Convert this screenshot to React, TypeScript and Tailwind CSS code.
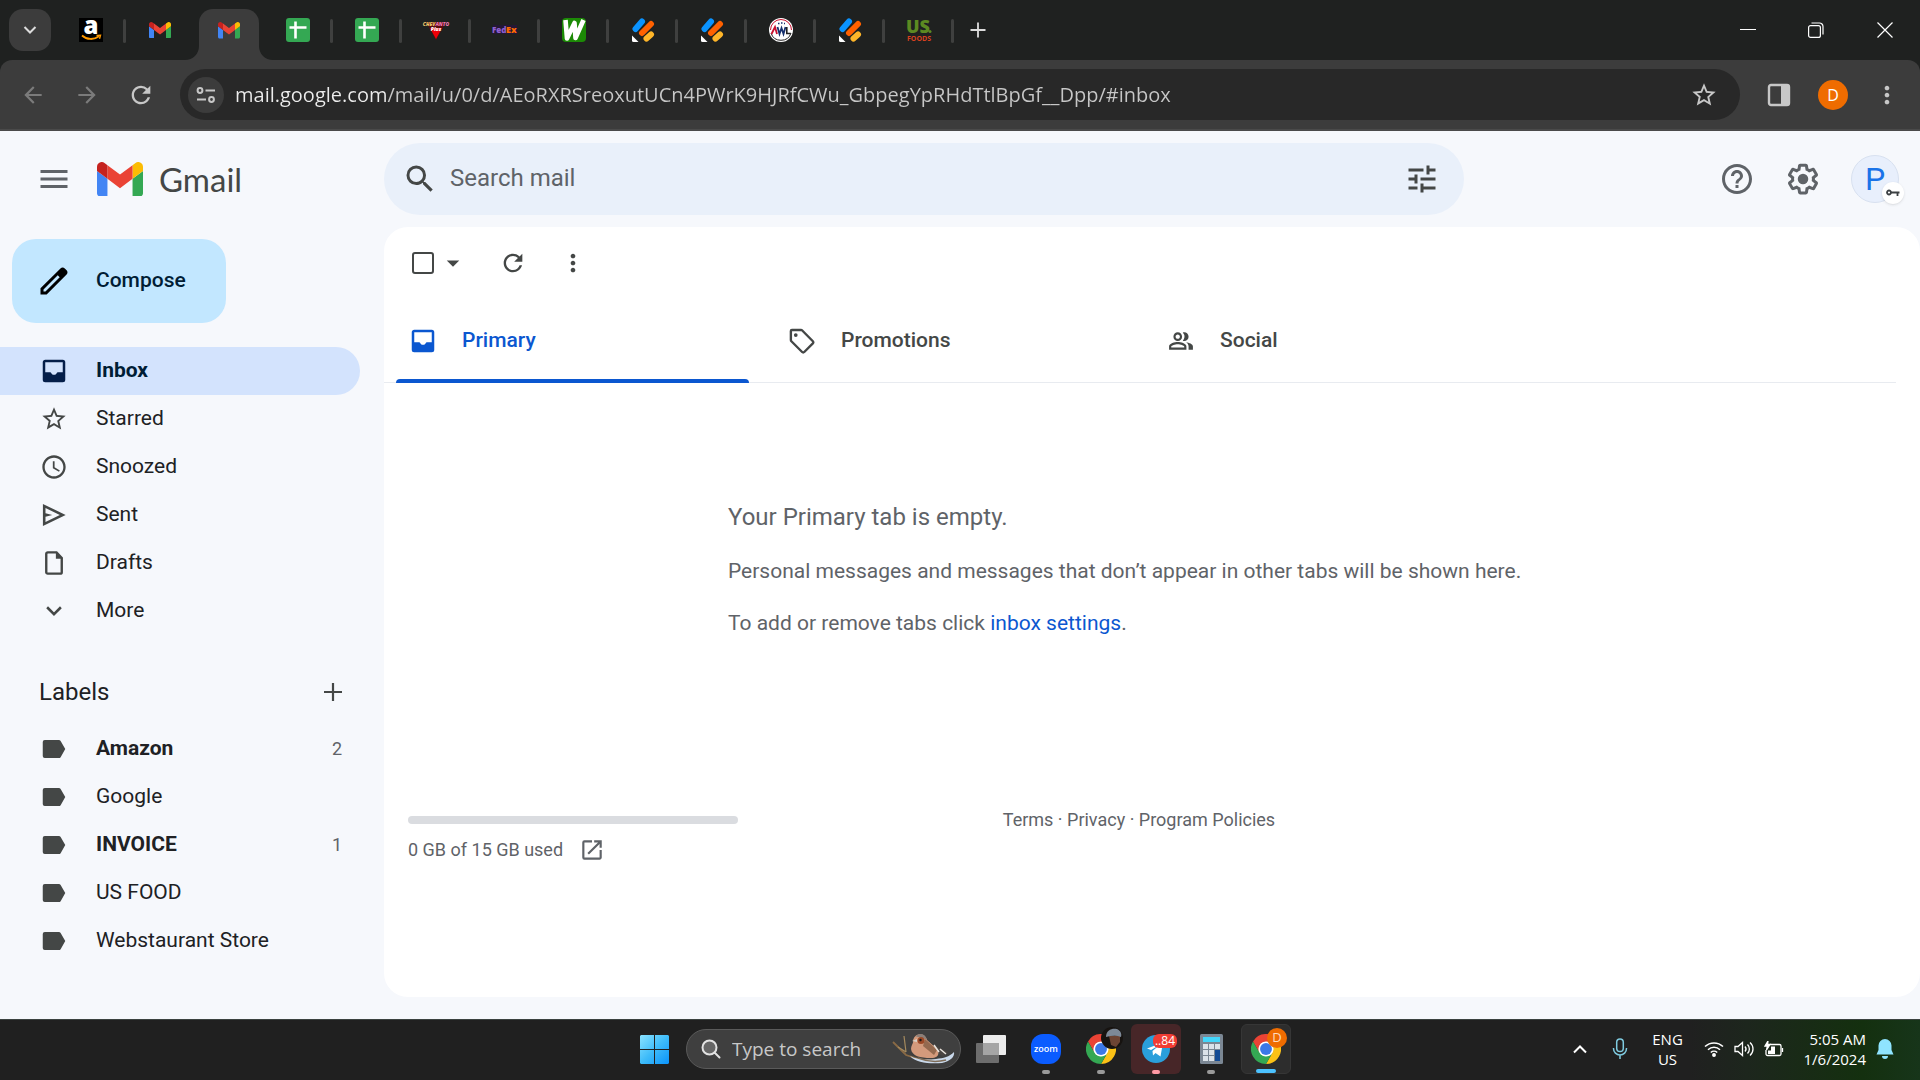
import React from "react";
import {
  MdArrowBack,
  MdArrowDropDown,
  MdArrowForward,
  MdHelpOutline,
  MdMenu,
  MdMoreVert,
  MdOpenInNew,
  MdOutlinePeopleAlt,
  MdRefresh,
  MdSchedule,
  MdSearch,
  MdStarBorder,
  MdTune,
} from "react-icons/md";

const gmailFont = "font-[Roboto,'Open_Sans',sans-serif]";
const systemFont = "font-['Open_Sans','Noto_Sans',sans-serif]";

interface IconProps {
  className?: string;
}

function GmailLogo({ className }: IconProps) {
  return (
    <svg viewBox="52 42 88 66" className={className} aria-hidden="true">
      <path fill="#4285f4" d="M58 108h14V74L52 59v43c0 3.32 2.69 6 6 6" />
      <path fill="#34a853" d="M120 108h14c3.32 0 6-2.69 6-6V59l-20 15" />
      <path fill="#fbbc04" d="M120 48v26l20-15v-8c0-7.42-8.47-11.65-14.4-7.2" />
      <path fill="#ea4335" d="M72 74V48l24 18 24-18v26L96 92" />
      <path fill="#c5221f" d="M52 51v8l20 15V48l-5.6-4.2c-5.94-4.45-14.4-.22-14.4 7.2" />
    </svg>
  );
}

function AmazonIcon() {
  return (
    <svg viewBox="0 0 24 24" className="size-6 overflow-visible" aria-hidden="true">
      <rect width="24" height="24" fill="#000" />
      <text x="12" y="16" textAnchor="middle" fontFamily="Open Sans" fontWeight="800" fontSize="24" fill="#fff">a</text>
      <path d="M3 17.5c5 4.5 12 4.5 17 .8" fill="none" stroke="#f90" strokeWidth="1.8" />
      <path d="M17.5 17.5l4-.3-1 3.6" fill="none" stroke="#f90" strokeWidth="1.4" />
    </svg>
  );
}

function SheetsIcon() {
  return (
    <svg viewBox="0 0 24 24" className="size-6" aria-hidden="true">
      <rect width="24" height="24" rx="3" fill="#34a853" />
      <path d="M9.5 3.500v17M3.500 9.500h17" stroke="#fff" strokeWidth="2.6" />
    </svg>
  );
}

function PizzaIcon() {
  return (
    <svg viewBox="0 0 24 24" className="size-6 overflow-visible" aria-hidden="true">
      <path d="M2 4h20L12 22z" fill="#5b0d10" />
      <path d="M6 10h12L12 21z" fill="#f00008" />
      <text x="12" y="8" textAnchor="middle" fontFamily="Open Sans" fontWeight="800" fontStyle="italic" fontSize="5" fill="#e879b0">
        <tspan fill="#e8c46a">CHEV</tspan>ANTO
      </text>
      <text x="12" y="13" textAnchor="middle" fontFamily="Open Sans" fontWeight="800" fontStyle="italic" fontSize="5" fill="#fff">Plus</text>
    </svg>
  );
}

function FedexIcon() {
  return (
    <svg viewBox="0 0 24 24" className="size-6 overflow-visible" aria-hidden="true">
      <rect y="7" width="24" height="9" fill="#241735" />
      <text x="-1" y="14.5" fontFamily="Open Sans" fontWeight="800" fontSize="8" fill="#8f5fd0">Fed</text>
      <text x="13" y="15" fontFamily="Open Sans" fontWeight="800" fontSize="9" fill="#ff6a00">Ex</text>
    </svg>
  );
}

function WIcon() {
  return (
    <svg viewBox="0 0 24 24" className="size-6" aria-hidden="true">
      <rect width="24" height="24" rx="4" fill="#1c8a06" />
      <path d="M3.500 2L5 20.500L12.500 5L13.500 20L21.500 2" fill="none" stroke="#fff" strokeWidth="4.6" strokeLinejoin="round" />
    </svg>
  );
}

function PencilIcon() {
  return (
    <svg viewBox="0 0 24 24" className="size-6" aria-hidden="true">
      <g strokeLinecap="round" strokeWidth="6" fill="none">
        <path d="M4.500 11L11 3.500" stroke="#0a93ff" />
        <path d="M11 15L20 6" stroke="#ff6100" />
        <path d="M15.500 20.500L20 16.500" stroke="#ffb629" />
      </g>
      <path d="M1 17.500L7.500 24H2.500a1.500 1.500 0 0 1-1.500-1.500z" fill="#fff" />
    </svg>
  );
}

function AwlIcon() {
  return (
    <svg viewBox="0 0 24 24" className="size-6" aria-hidden="true">
      <circle cx="12" cy="12" r="12" fill="#fff" />
      <path d="M1.500 12a10.500 10.500 0 0 1 21 0" fill="none" stroke="#c8102e" />
      <path d="M2 15a10.500 10.500 0 0 0 20 0" fill="none" stroke="#222" />
      <path d="M2.500 16l3.500-7 2 7" fill="none" stroke="#c8102e" strokeWidth="1.8" />
      <path d="M8.500 9l2 7 2-6 2 6 2-7" fill="none" stroke="#16306d" strokeWidth="1.8" />
      <path d="M17.800 9v6.500h4" fill="none" stroke="#222" strokeWidth="1.6" />
      <path d="M9 5.500h1.500M12 5h1.500M15 5.500h1" stroke="#16306d" strokeWidth="1.3" />
    </svg>
  );
}

function UsFoodsIcon() {
  return (
    <svg viewBox="0 0 24 24" className="size-6 overflow-visible" aria-hidden="true">
      <text x="-1" y="14.5" fontFamily="Open Sans" fontWeight="800" fontSize="18" fill="#5c8a22">US</text>
      <circle cx="23" cy="13.5" r="1.5" fill="#5c8a22" />
      <text x="0" y="23" fontFamily="Open Sans" fontWeight="700" fontSize="7" fill="#d8401f">FOODS</text>
    </svg>
  );
}

function InboxIcon({ className }: IconProps) {
  return (
    <svg viewBox="0 0 24 24" className={className} fill="currentColor" fillRule="evenodd" aria-hidden="true">
      <path d="M5 3h14a2 2 0 0 1 2 2v14a2 2 0 0 1-2 2H5a2 2 0 0 1-2-2V5c0-1.100.9-2 2-2zm0 2v8h3.800c.6 0 .9.300 1.100.8.4.8 1.100 1.200 2.100 1.200s1.700-.4 2.100-1.200c.2-.5.500-.8 1.100-.8H19V5z" />
    </svg>
  );
}

function SendIcon({ className }: IconProps) {
  return (
    <svg viewBox="0 0 24 24" className={className} fill="currentColor" fillRule="evenodd" aria-hidden="true">
      <path d="M2.500 2.500v19L22 12zM4.700 6L17 12 4.700 18v-4.500L10.500 12l-5.800-1.500z" />
    </svg>
  );
}

function FileIcon({ className }: IconProps) {
  return (
    <svg viewBox="0 0 24 24" className={className} aria-hidden="true">
      <path d="M14 3.500H7A1.200 1.200 0 0 0 5.800 4.700v14.600A1.200 1.200 0 0 0 7 20.500h10a1.200 1.200 0 0 0 1.200-1.200V8z" fill="none" stroke="currentColor" strokeWidth="1.9" />
      <path d="M13.500 3v5.500h5.300z" fill="currentColor" />
    </svg>
  );
}

function ChevronIcon({ className }: IconProps) {
  return (
    <svg viewBox="0 0 24 24" className={className} fill="none" stroke="currentColor" strokeWidth="2" aria-hidden="true">
      <path d="M6.500 9l5.500 5.500L17.500 9" />
    </svg>
  );
}

function PlusIcon({ className }: IconProps) {
  return (
    <svg viewBox="0 0 24 24" className={className} fill="none" stroke="currentColor" strokeWidth="2.2" aria-hidden="true">
      <path d="M12 3v18M3 12h18" />
    </svg>
  );
}

function LabelIcon({ className }: IconProps) {
  return (
    <svg viewBox="0 0 24 24" className={className} fill="currentColor" aria-hidden="true">
      <path d="M4.600 4.800h11.300c.6 0 1.100.3 1.400.7L21 12l-3.700 6.500c-.3.4-.8.7-1.400.7H4.600A1.600 1.600 0 0 1 3 17.600V6.400a1.600 1.600 0 0 1 1.600-1.600z" />
    </svg>
  );
}

function TagIcon({ className }: IconProps) {
  return (
    <svg viewBox="0 0 24 24" className={className} aria-hidden="true">
      <path d="M3.900 3.200h7.300c.4 0 .7.1 1 .4l8.500 8.600c.5.500.5 1.200 0 1.700l-6.900 6.900c-.5.500-1.200.5-1.700 0L3.500 12.200c-.3-.3-.4-.6-.4-1V4c0-.5.3-.8.8-.8z" fill="none" stroke="currentColor" strokeWidth="1.9" />
      <circle cx="7" cy="7.2" r="1.5" fill="currentColor" />
    </svg>
  );
}

function GearIcon({ className }: IconProps) {
  return (
    <svg viewBox="0 0 24 24" className={className} fill="currentColor" aria-hidden="true">
      <path d="M13.850 22.250h-3.700c-.74 0-1.360-.54-1.450-1.270l-.27-1.890c-.27-.14-.53-.29-.79-.46l-1.800.72c-.7.26-1.470-.03-1.810-.65L2.200 15.530c-.35-.66-.2-1.440.36-1.880l1.530-1.190c-.01-.15-.02-.3-.02-.46 0-.15.01-.31.02-.46l-1.520-1.190c-.59-.45-.74-1.260-.37-1.880l1.850-3.190c.34-.62 1.110-.9 1.790-.63l1.810.73c.26-.17.52-.32.78-.46l.27-1.910c.09-.7.71-1.250 1.440-1.250h3.700c.74 0 1.360.54 1.450 1.270l.27 1.890c.27.14.53.29.79.46l1.800-.72c.71-.26 1.480.03 1.820.65l1.840 3.180c.36.66.2 1.440-.36 1.880l-1.520 1.190c.01.15.02.3.02.46s-.01.31-.02.46l1.520 1.190c.56.45.72 1.230.37 1.860l-1.860 3.220c-.34.62-1.110.9-1.800.63l-1.800-.72c-.26.17-.52.32-.78.46l-.27 1.910c-.1.680-.72 1.220-1.460 1.220zm-3.230-2h2.760l.37-2.550.53-.22c.44-.18.88-.44 1.340-.78l.45-.34 2.380.96 1.380-2.400-2.030-1.580.07-.56c.03-.26.06-.51.06-.78s-.03-.53-.06-.78l-.07-.56 2.030-1.580-1.390-2.400-2.390.96-.45-.35c-.42-.32-.87-.58-1.330-.77l-.52-.22-.37-2.550h-2.760l-.37 2.550-.53.21c-.44.19-.88.44-1.340.79l-.45.33-2.380-.95-1.390 2.390 2.030 1.580-.07.56a7 7 0 0 0-.06.79c0 .26.02.53.06.78l.07.56-2.030 1.580 1.380 2.400 2.390-.96.45.35c.43.33.86.58 1.330.77l.53.22z" />
      <circle cx="12" cy="12" r="3.5" />
    </svg>
  );
}

function ChromeIcon({ className }: IconProps) {
  return (
    <svg viewBox="0 0 48 48" className={className} aria-hidden="true">
      <circle cx="24" cy="24" r="13" fill="#fff" />
      <path d="M3.200 12A24 24 0 0 1 44.800 12H24A12 12 0 0 0 13.600 30z" fill="#ea4335" />
      <path d="M44.800 12A24 24 0 0 1 24 48L34.400 30A12 12 0 0 0 24 12z" fill="#fbc116" />
      <path d="M24 48A24 24 0 0 1 3.200 12L13.600 30A12 12 0 0 0 34.400 30z" fill="#34a853" />
      <circle cx="24" cy="24" r="9.5" fill="#3b78e7" />
    </svg>
  );
}

function BirdDrawing() {
  return (
    <svg viewBox="0 0 64 32" className="h-8 w-16 shrink-0" aria-hidden="true">
      <path d="M1 9l13 13 16 5 18 1" fill="none" stroke="#8a6a45" strokeWidth="1.8" />
      <path d="M12 3l2 16M6 14l8 5" fill="none" stroke="#a58a5e" strokeWidth="1.2" />
      <path d="M18 23c8 4 16 4 26 3 8-1 13-2 18-7 1 5-4 9-12 11-12 1-26 0-32-7z" fill="#c9d8ea" />
      <path d="M26 25c10 4 20 4 28 2" stroke="#7e6c57" strokeWidth="1.5" fill="none" />
      <path d="M38 10l18 9-5 4-9-4z" fill="#4a4542" />
      <path d="M21 7c3-8 12-7 14 0l10 9c3 5 1 9-6 9-11 0-19-2-20-9 0-4 3-6 2-9z" fill="#d39a7c" />
      <path d="M33 6l12 11-3 5-11-9z" fill="#94694f" />
      <path d="M42 12l5 7m1-3l6 5" stroke="#e9e5df" strokeWidth="1.5" />
      <path d="M24 3.500c3-4 9-3 11 3l-7-2z" fill="#8b7f79" />
      <circle cx="29" cy="7.5" r="3.5" fill="#9c4a28" />
      <circle cx="28.5" cy="7" r="1.2" fill="#191919" />
      <path d="M25 6l-5 2 5 1z" fill="#d8d2c8" />
    </svg>
  );
}

interface BrowserTab {
  title: string;
  icon: React.ReactNode;
  active?: boolean;
  divider?: boolean;
}

const browserTabs: BrowserTab[] = [
  { title: "Amazon", icon: <AmazonIcon />, divider: true },
  { title: "Gmail", icon: <GmailLogo className="w-[22px]" /> },
  { title: "Inbox", icon: <GmailLogo className="w-[22px]" />, active: true },
  { title: "Sheet 1", icon: <SheetsIcon />, divider: true },
  { title: "Sheet 2", icon: <SheetsIcon />, divider: true },
  { title: "Pizza", icon: <PizzaIcon />, divider: true },
  { title: "FedEx", icon: <FedexIcon />, divider: true },
  { title: "Webstaurant", icon: <WIcon />, divider: true },
  { title: "Editor 1", icon: <PencilIcon />, divider: true },
  { title: "Editor 2", icon: <PencilIcon />, divider: true },
  { title: "AWL", icon: <AwlIcon />, divider: true },
  { title: "Editor 3", icon: <PencilIcon />, divider: true },
  { title: "US Foods", icon: <UsFoodsIcon />, divider: true },
];

function TabStrip() {
  return (
    <div className="flex h-[60px] items-stretch bg-[#1f2120] pl-[9px] text-[#dcdcdc]">
      <button aria-label="Search tabs" className="mt-[9px] mr-[5px] flex size-[42px] items-center justify-center rounded-[14px] bg-[#3c3c3c]">
        <ChevronIcon className="size-6" />
      </button>
      {browserTabs.map((tab) => (
        <button key={tab.title} aria-label={tab.title} className="relative flex w-[69px] items-stretch justify-center">
          {tab.active ? (
            <span className="relative mt-[9px] flex w-[60px] items-start justify-center rounded-t-[14px] bg-[#3c3c3c] pt-[13px]">
              {tab.icon}
              <svg viewBox="0 0 14 14" className="absolute bottom-0 -left-3.5 size-3.5" aria-hidden="true">
                <path d="M14 0v14H0C8 14 14 8 14 0z" fill="#3c3c3c" />
              </svg>
              <svg viewBox="0 0 14 14" className="absolute -right-3.5 bottom-0 size-3.5" aria-hidden="true">
                <path d="M0 0v14h14C6 14 0 8 0 0z" fill="#3c3c3c" />
              </svg>
            </span>
          ) : (
            <span className="flex h-[60px] items-center">{tab.icon}</span>
          )}
          {tab.divider && <span className="absolute top-[19px] -right-px h-6 w-[3px] rounded-full bg-[#3f403f]" />}
        </button>
      ))}
      <button aria-label="New tab" className="flex w-[50px] items-center justify-center">
        <PlusIcon className="size-5" />
      </button>
      <div className="ml-auto flex text-white">
        <button aria-label="Minimize" className="flex w-[69px] items-center justify-center">
          <svg viewBox="0 0 16 16" className="size-4" stroke="currentColor" aria-hidden="true">
            <path d="M0 7.500h16" />
          </svg>
        </button>
        <button aria-label="Restore" className="flex w-[68px] items-center justify-center">
          <svg viewBox="0 0 16 16" className="size-4" fill="none" stroke="currentColor" strokeWidth="1.2" aria-hidden="true">
            <rect x=".6" y="3.6" width="11.8" height="11.8" rx="2" />
            <path d="M3.500 1h8A3.500 3.500 0 0 1 15 4.500v8" />
          </svg>
        </button>
        <button aria-label="Close" className="flex w-[70px] items-center justify-center">
          <svg viewBox="0 0 16 16" className="size-4" stroke="currentColor" strokeWidth="1.2" aria-hidden="true">
            <path d="M.5.5l15 15M15.500.5l-15 15" />
          </svg>
        </button>
      </div>
    </div>
  );
}

function AddressBar() {
  return (
    <div className="bg-[#1f2120]">
      <div className="flex h-[71px] items-center rounded-t-xl border-b-2 border-[#4a4a4a] bg-[#3c3c3c] pl-1.5 text-[#c7c7c7]">
        <button aria-label="Back" className="flex w-[54px] justify-center text-[#7b7b7b]"><MdArrowBack className="size-[26px]" /></button>
        <button aria-label="Forward" className="flex w-[54px] justify-center text-[#7b7b7b]"><MdArrowForward className="size-[26px]" /></button>
        <button aria-label="Reload" className="flex w-[54px] justify-center"><MdRefresh className="size-[28px]" /></button>
        <div className="ml-3 flex h-[51px] flex-1 items-center rounded-full bg-[#282828] pr-[22px] pl-2">
          <button aria-label="Site information" className="flex size-9 items-center justify-center rounded-full bg-[#3c3c3c]">
            <svg viewBox="0 0 20 20" className="size-5" fill="none" stroke="currentColor" strokeWidth="2" aria-hidden="true">
              <circle cx="4" cy="5.5" r="2.4" />
              <path d="M9.500 5.500H19M1 14.500h9" />
              <circle cx="15.5" cy="14.5" r="2.4" />
            </svg>
          </button>
          <input
            aria-label="Address"
            defaultValue="mail.google.com/mail/u/0/d/AEoRXRSreoxutUCn4PWrK9HJRfCWu_GbpegYpRHdTtlBpGf__Dpp/#inbox"
            className="ml-[11px] min-w-0 flex-1 bg-[linear-gradient(90deg,#ececec_152px,#c7c7c7_152px)] bg-clip-text text-xl text-transparent outline-none"
          />
          <button aria-label="Bookmark this page"><MdStarBorder className="size-7" /></button>
        </div>
        <button aria-label="Side panel" className="ml-[27px]">
          <svg viewBox="0 0 24 24" className="size-6" aria-hidden="true">
            <rect x="2" y="2" width="20" height="20" rx="2" fill="none" stroke="currentColor" strokeWidth="2.4" />
            <path d="M14 2h8v20h-8z" fill="currentColor" />
          </svg>
        </button>
        <button aria-label="Profile" className="ml-[27px] flex size-[30px] items-center justify-center rounded-full bg-[#ef6c00] text-base text-white">D</button>
        <button aria-label="Chrome menu" className="mr-[19px] ml-[25px]"><MdMoreVert className="size-7" /></button>
      </div>
    </div>
  );
}

function GmailHeader() {
  return (
    <header className="flex h-24 items-center text-[#5f6368]">
      <div className="flex w-96 shrink-0 items-center">
        <button aria-label="Main menu" className="ml-9"><MdMenu className="size-9" /></button>
        <a href="#inbox" className="ml-[25px] flex items-center gap-4">
          <GmailLogo className="w-[46px]" />
          <span className="font-[Lato,sans-serif] text-[33px] leading-10 text-[#444746]">Gmail</span>
        </a>
      </div>
      <div className="flex h-[72px] max-w-[1080px] flex-1 items-center rounded-full bg-[#e9f0fa] pr-4 pl-[18px] text-[#444746]">
        <button aria-label="Search" className="flex size-9 items-center justify-center"><MdSearch className="size-9" /></button>
        <input aria-label="Search mail" placeholder="Search mail" className="ml-3 min-w-0 flex-1 bg-transparent pb-0.5 text-2xl outline-none placeholder:text-[#5f6368]" />
        <button aria-label="Show search options" className="mr-2"><MdTune className="size-9" /></button>
      </div>
      <div className="ml-auto flex items-center pr-[21px]">
        <button aria-label="Support"><MdHelpOutline className="size-9" /></button>
        <button aria-label="Settings" className="ml-[30px]"><GearIcon className="size-9" /></button>
        <button aria-label="Account" className="relative ml-[30px] flex size-12 items-center justify-center rounded-full border border-[#d8e1f0] bg-[#e8effc] text-[32px] text-[#1a73e8]">
          P
          <span className="absolute -right-1.5 -bottom-0.5 flex size-[22px] items-center justify-center rounded-full bg-white shadow">
            <svg viewBox="0 0 14 8" className="h-2 w-3.5" fill="none" stroke="#3c4043" strokeWidth="1.8" aria-hidden="true">
              <circle cx="3" cy="3.5" r="2" />
              <path d="M5 3.500h8.500M11.500 3.500V7" />
            </svg>
          </span>
        </button>
      </div>
    </header>
  );
}

const folders = [
  { name: "Inbox", icon: <InboxIcon className="size-[30px]" />, active: true },
  { name: "Starred", icon: <MdStarBorder className="size-7" /> },
  { name: "Snoozed", icon: <MdSchedule className="size-7" /> },
  { name: "Sent", icon: <SendIcon className="size-7" /> },
  { name: "Drafts", icon: <FileIcon className="size-[30px]" /> },
  { name: "More", icon: <ChevronIcon className="size-[30px]" /> },
];

const labels = [
  { name: "Amazon", count: 2 },
  { name: "Google" },
  { name: "INVOICE", count: 1 },
  { name: "US FOOD" },
  { name: "Webstaurant Store" },
];

function Sidebar() {
  return (
    <aside className="w-96 shrink-0 pr-6 text-[21px] text-[#202124]">
      <button className="mt-3 ml-3 flex h-[84px] w-[214px] items-center rounded-3xl bg-[#c2e7ff] font-medium text-[#001d35]">
        <svg viewBox="0 0 24 24" className="ml-6 size-9" fill="#000" fillRule="evenodd" aria-hidden="true">
          <path d="M20.400 4.820l-1.220-1.220c-.8-.8-2.080-.8-2.880 0L3 16.900V21h4.100L20.400 7.700c.8-.8.8-2.080 0-2.880zM6.300 19H5v-1.300l9.500-9.500 1.300 1.300z" />
        </svg>
        <span className="ml-6">Compose</span>
      </button>
      <nav aria-label="Folders" className="mt-6">
        {folders.map((folder) => (
          <a
            key={folder.name}
            href={`#${folder.name.toLowerCase()}`}
            className={`flex h-12 items-center rounded-r-full pl-9 ${folder.active ? "bg-[#d3e3fd] font-bold text-[#001d35]" : ""}`}
          >
            <span className={`flex w-9 justify-center ${folder.active ? "text-[#041e49]" : "text-[#444746]"}`}>{folder.icon}</span>
            <span className="ml-6">{folder.name}</span>
          </a>
        ))}
      </nav>
      <div className="mt-8 mb-2 flex h-[50px] items-center justify-between pr-[15px] pl-[39px]">
        <h2 className="text-2xl text-[#202124]">Labels</h2>
        <button aria-label="Create new label" className="text-[#444746]"><PlusIcon className="size-6" /></button>
      </div>
      <nav aria-label="Labels">
        {labels.map((label) => (
          <a key={label.name} href="#label" className="flex h-12 items-center pr-[18px] pl-9">
            <span className="flex w-9 justify-center text-[#444746]"><LabelIcon className="size-[30px]" /></span>
            <span className={`ml-6 flex-1 ${label.count ? "font-bold" : ""}`}>{label.name}</span>
            {label.count && <span className="text-lg text-[#5f6368]">{label.count}</span>}
          </a>
        ))}
      </nav>
    </aside>
  );
}

const categories = [
  { name: "Primary", icon: <InboxIcon className="size-[30px]" />, active: true },
  { name: "Promotions", icon: <TagIcon className="size-[30px]" /> },
  { name: "Social", icon: <MdOutlinePeopleAlt className="size-[26px]" /> },
];

function MailPanel() {
  return (
    <main className="flex-1 rounded-3xl bg-white text-[#5f6368]">
      <div className="flex h-[72px] items-center pl-7 text-[#444746]">
        <input type="checkbox" aria-label="Select" className="size-[22px] appearance-none rounded-[3px] border-2 border-[#444746]" />
        <button aria-label="Select options" className="ml-1"><MdArrowDropDown className="size-[30px]" /></button>
        <button aria-label="Refresh" className="ml-[31px]"><MdRefresh className="size-[28px]" /></button>
        <button aria-label="More" className="ml-8"><MdMoreVert className="size-[28px]" /></button>
      </div>
      <div role="tablist" className="mr-6 flex h-[84px] border-b border-[#e8ebf0]">
        {categories.map((category) => (
          <button
            key={category.name}
            role="tab"
            aria-selected={!!category.active}
            className={`relative flex w-[379px] items-center pl-6 text-[21px] font-medium ${category.active ? "text-[#0b57d0]" : "text-[#444746]"}`}
          >
            <span className="flex w-[30px] justify-center">{category.icon}</span>
            <span className="ml-6">{category.name}</span>
            {category.active && <span className="absolute right-3.5 -bottom-px left-3 h-1 rounded-t bg-[#0b57d0]" />}
          </button>
        ))}
      </div>
      <div className="flex justify-center pt-28 pr-[38px]">
        <div className="w-[810px] text-[21px] whitespace-nowrap">
          <p className="mb-4 text-2xl leading-11">Your Primary tab is empty.</p>
          <p className="mb-5 leading-8">Personal messages and messages that don’t appear in other tabs will be shown here.</p>
          <p className="leading-8">
            To add or remove tabs click <a href="#settings" className="text-[#0b57d0]">inbox settings</a>.
          </p>
        </div>
      </div>
      <footer className="grid grid-cols-3 pt-[167px] pr-[50px] pb-[120px] pl-6 text-lg">
        <div>
          <div className="mt-[10px] h-2 w-[330px] rounded-full bg-[#dadce0]" />
          <p className="mt-3 flex items-center">
            0 GB of 15 GB used
            <a href="#storage" aria-label="Manage storage" className="ml-4"><MdOpenInNew className="size-[26px]" /></a>
          </p>
        </div>
        <p className="text-center whitespace-nowrap">
          <a href="#terms">Terms</a> · <a href="#privacy">Privacy</a> · <a href="#policies">Program Policies</a>
        </p>
      </footer>
    </main>
  );
}

function Taskbar() {
  return (
    <div className="grid h-[61px] grid-cols-[1fr_auto_1fr] items-start border-t border-[#3b423f] bg-[linear-gradient(90deg,#202020_88%,#1d261d_91%,#14300f_97%,#17351a_100%)] text-white">
      <div />
      <div className="flex items-center gap-[5px] pt-1">
        <button aria-label="Start" className="mr-0.5 flex size-[50px] items-center justify-center">
          <svg viewBox="0 0 29 29" className="size-[29px]" aria-hidden="true">
            <defs>
              <linearGradient id="win" x1="0" y1="0" x2="29" y2="29" gradientUnits="userSpaceOnUse">
                <stop stopColor="#8be3ff" />
                <stop offset=".5" stopColor="#3fbcf9" />
                <stop offset="1" stopColor="#0a93fb" />
              </linearGradient>
            </defs>
            <path d="M1 0h13v14H0V1zM15 0h13l1 1v13H15zM0 15h14v14H1l-1-1zM15 15h14v13l-1 1H15z" fill="url(#win)" />
          </svg>
        </button>
        <label className="flex h-10 w-[275px] items-center rounded-full border border-[#5a5a5a] bg-[#3f3f3f] pr-1 pl-3.5">
          <svg viewBox="0 0 20 20" className="size-5 shrink-0" fill="#666" stroke="#e2e2e2" strokeWidth="2" strokeLinecap="round" aria-hidden="true">
            <circle cx="8.5" cy="8.5" r="7" />
            <path d="M13.500 13.500L18.500 18.500" />
          </svg>
          <input aria-label="Type to search" placeholder="Type to search" className="ml-[11px] min-w-0 flex-1 bg-transparent text-[19px] outline-none placeholder:text-[#c8c8c8]" />
          <BirdDrawing />
        </label>
        <button aria-label="Task view" className="flex size-[50px] items-center justify-center">
          <svg viewBox="0 0 30 28" className="h-7 w-[30px]" aria-hidden="true">
            <rect x="7" width="23" height="20" rx="1" fill="#ececec" />
            <rect y="8" width="23" height="20" rx="1" fill="#6d6d6d" />
            <path d="M7 8h16v12H7z" fill="#a5a5a5" />
          </svg>
        </button>
        <button className="relative flex size-[50px] items-center justify-center">
          <span className="flex size-[30px] items-center justify-center rounded-xl bg-[#0b5cff] text-[9px] font-semibold">zoom</span>
          <span className="absolute bottom-0 h-1 w-2 rounded-full bg-[#9a9a9a]" />
        </button>
        <button aria-label="Chrome" className="relative flex size-[50px] items-center justify-center">
          <ChromeIcon className="size-[30px]" />
          <svg viewBox="0 0 22 22" className="absolute top-[3px] right-[3px] size-[22px]" aria-hidden="true">
            <circle cx="11" cy="11" r="11" fill="#171310" />
            <path d="M8 9h11v6l-4 5-5-2z" fill="#6d4433" />
            <path d="M5 10C5 3 11 1 16 2c4 2 5 5 4 8-5-2-10-1-15 0z" fill="#7d8997" />
          </svg>
          <span className="absolute bottom-0 h-1 w-2 rounded-full bg-[#9a9a9a]" />
        </button>
        <button aria-label="Telegram" className="relative flex size-[50px] items-center justify-center rounded-md bg-[#472628]">
          <svg viewBox="0 0 28 28" className="size-7" aria-hidden="true">
            <circle cx="14" cy="14" r="14" fill="#2a9fdb" />
            <path d="M5 13.500L21 7.500l-2.500 14-5-3.500-2.500 2.500-.5-4.500 7-6-8.500 5z" fill="#fff" />
          </svg>
          <span className="absolute top-[10px] right-1 rounded-md bg-[#f23c34] px-0.5 text-[12px] leading-[14px]">..84</span>
          <span className="absolute bottom-0 h-1 w-2 rounded-full bg-[#ff99a4]" />
        </button>
        <button aria-label="Calculator" className="relative flex size-[50px] items-center justify-center">
          <svg viewBox="0 0 23 30" className="h-[30px] w-[23px]" aria-hidden="true">
            <rect width="23" height="30" rx="1.5" fill="#7b8794" />
            <rect x="3" y="3" width="17" height="5" fill="#43d6fb" />
            <path d="M3 10h5v5H3zM9 10h5v5H9zM15 10h5v5h-5zM3 16h5v5H3zM9 16h5v5H9zM3 22h5v5H3zM9 22h5v5H9z" fill="#dbe2e9" />
            <path d="M15 16h5v11h-5z" fill="#124a94" />
          </svg>
          <span className="absolute bottom-0 h-1 w-2 rounded-full bg-[#9a9a9a]" />
        </button>
        <button aria-label="Chrome profile D" className="relative flex size-[50px] items-center justify-center rounded-md border border-[#363636] bg-[#2d2d2d]">
          <ChromeIcon className="size-[30px]" />
          <span className="absolute top-[3px] right-[3px] flex size-5 items-center justify-center rounded-full bg-[#ef6c00] text-[13px] text-[#ffdcc0]">D</span>
          <span className="absolute bottom-0 h-1 w-5 rounded-full bg-[#4cc2ff]" />
        </button>
      </div>
      <div className="flex items-center justify-end pt-[9px] pr-[26px] text-[15px] leading-5">
        <button aria-label="Show hidden icons">
          <svg viewBox="0 0 16 16" className="size-4" fill="none" stroke="currentColor" strokeWidth="2" aria-hidden="true">
            <path d="M2 11.500l6-6 6 6" />
          </svg>
        </button>
        <button aria-label="Microphone" className="ml-6">
          <svg viewBox="0 0 16 22" className="h-[22px] w-4" fill="none" stroke="#7fcbe0" strokeWidth="1.5" aria-hidden="true">
            <rect x="4.7" y="1" width="6.6" height="12.5" rx="3.3" />
            <path d="M1.500 10v.5a6.500 6.500 0 0 0 13 0V10M8 17v4" />
          </svg>
        </button>
        <button className="ml-5 w-10 text-center">ENG<br />US</button>
        <button aria-label="Network, volume, battery" className="ml-4 flex items-center gap-2.5">
          <svg viewBox="0 0 20 16" className="h-4 w-5" fill="none" stroke="currentColor" strokeWidth="1.5" aria-hidden="true">
            <path d="M1 5.500a13 13 0 0 1 18 0M4 8.700a8.700 8.700 0 0 1 12 0M6.800 11.500a4.700 4.700 0 0 1 6.400 0" />
            <circle cx="10" cy="14" r="1.2" fill="currentColor" />
          </svg>
          <svg viewBox="0 0 20 16" className="h-4 w-5" fill="none" stroke="currentColor" strokeWidth="1.3" aria-hidden="true">
            <path d="M1 5.500h3L8.500 1.500v13L4 10.500H1zM11 5.500c1.300 1.500 1.300 3.500 0 5M13.500 3.500c2.500 2.500 2.500 6.500 0 9M16 1.500c4 3.500 4 9.500 0 13" />
          </svg>
          <svg viewBox="0 0 20 16" className="h-4 w-5" fill="none" stroke="currentColor" strokeWidth="1.3" aria-hidden="true">
            <path d="M6 3.500h9.500A1.500 1.500 0 0 1 17 5v8a1.500 1.500 0 0 1-1.500 1.500h-12A1.500 1.500 0 0 1 2 13V9" />
            <path d="M4 13V9.500h3V5.500h4V13z" fill="currentColor" stroke="none" />
            <path d="M18.500 7v4M4 0L1 5h2.500L2.500 9 6 3.500H3.500z" fill="currentColor" />
          </svg>
        </button>
        <button className="ml-5 text-right whitespace-nowrap">5:05 AM<br />1/6/2024</button>
        <button aria-label="Notifications" className="ml-2.5">
          <svg viewBox="0 0 18 20" className="h-5 w-[18px]" fill="#8fe4ff" aria-hidden="true">
            <path d="M9 0a6.500 6.500 0 0 1 6.500 6.500V11l2 4.500H.5l2-4.500V6.500A6.500 6.500 0 0 1 9 0zM6 17h6a3 3 0 0 1-6 0z" />
          </svg>
        </button>
      </div>
    </div>
  );
}

function App() {
  return (
    <div className="flex min-h-screen flex-col bg-[#f6f8fc]">
      <div className={systemFont}>
        <TabStrip />
        <AddressBar />
      </div>
      <div className={`flex flex-1 flex-col pb-[22px] ${gmailFont}`}>
        <GmailHeader />
        <div className="flex flex-1">
          <Sidebar />
          <MailPanel />
        </div>
      </div>
      <div className={systemFont}>
        <Taskbar />
      </div>
    </div>
  );
}

export default App;
